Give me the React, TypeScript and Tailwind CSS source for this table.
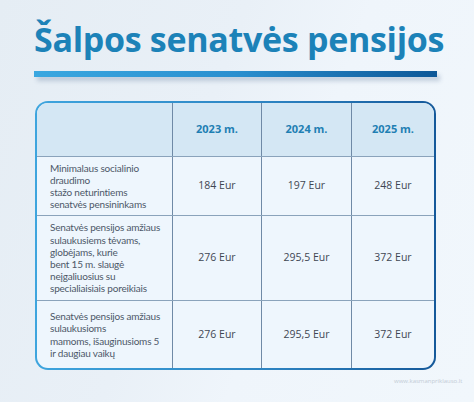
import React from "react";

const rows = [
  {
    label: ["Minimalaus socialinio", "draudimo", "stažo neturintiems", "senatvės pensininkams"],
    vals: ["184 Eur", "197 Eur", "248 Eur"],
    h: "h-[59px]",
  },
  {
    label: [
      "Senatvės pensijos amžiaus",
      "sulaukusiems tėvams,",
      "globėjams, kurie",
      "bent 15 m. slaugė",
      "neįgaliuosius su",
      "specialiaisiais poreikiais",
    ],
    vals: ["276 Eur", "295,5 Eur", "372 Eur"],
    h: "h-[85px]",
  },
  {
    label: [
      "Senatvės pensijos amžiaus",
      "sulaukusioms",
      "mamoms, išauginusioms 5",
      "ir daugiau vaikų",
    ],
    vals: ["276 Eur", "295,5 Eur", "372 Eur"],
    h: "h-[67px]",
  },
];

export default function App() {
  return (
    <div
      className="w-[474px] h-[402px] overflow-hidden bg-[linear-gradient(110deg,#e5edf4_0%,#e9f0f7_40%,#eff5fb_60%,#f1f7fc_100%)] relative"
      style={{ fontFamily: '"Open Sans", "Noto Sans", sans-serif' }}
    >
      <div className="flex flex-col items-start pl-[34px] pt-[16px]">
        <h1 className="text-[34px] leading-[46px] font-bold text-[#1c82b8] tracking-[-0.3px] whitespace-nowrap">
          Šalpos senatvės pensijos
        </h1>
        <div className="mt-[9px] w-[403px] h-[6px] bg-[linear-gradient(90deg,#3aa7e0,#2b8fcf_50%,#0d5797)] shadow-[3px_4px_4px_rgba(60,90,130,0.25)]" />
      </div>

      <div className="ml-[35px] mt-[24px] w-[401px] rounded-[13px] p-[2px] bg-[linear-gradient(90deg,#3ea5de,#2c82c0_60%,#15599a)]">
        <div className="rounded-[11px] overflow-hidden bg-[#eef6fd]">
          <div className="grid grid-cols-[136px_89px_90px_82px] h-[54px] bg-[#d4e7f4] border-b border-[#8aa3bb]">
            <div className="border-r border-[#6f8aa6]" />
            {["2023 m.", "2024 m.", "2025 m."].map((y, i) => (
              <div
                key={y}
                className={`flex items-center justify-center text-[11px] font-bold text-[#1f7fb3] ${i < 2 ? "border-r border-[#6f8aa6]" : ""}`}
              >
                {y}
              </div>
            ))}
          </div>
          {rows.map((r, ri) => (
            <div
              key={ri}
              className={`grid grid-cols-[136px_89px_90px_82px] ${r.h} ${ri < 2 ? "border-b border-[#8aa3bb]" : ""}`}
            >
              <div
                className="border-r border-[#6f8aa6] flex flex-col justify-center pl-[13px] text-[10px] leading-[12.2px] tracking-[-0.2px] text-[#4d5868]"
                style={{ fontFamily: 'Lato, "Open Sans", sans-serif' }}
              >
                {r.label.map((l) => (
                  <span key={l} className="whitespace-nowrap">{l}</span>
                ))}
              </div>
              {r.vals.map((v, i) => (
                <div
                  key={i}
                  className={`flex items-center justify-center text-[10.5px] text-[#3f4653] ${i < 2 ? "border-r border-[#6f8aa6]" : ""}`}
                >
                  {v}
                </div>
              ))}
            </div>
          ))}
        </div>
      </div>

      <div className="absolute left-[394px] top-[377px] text-[6px] text-[#c3ccd6] whitespace-nowrap">
        www.kasmanpriklauso.lt
      </div>
    </div>
  );
}
